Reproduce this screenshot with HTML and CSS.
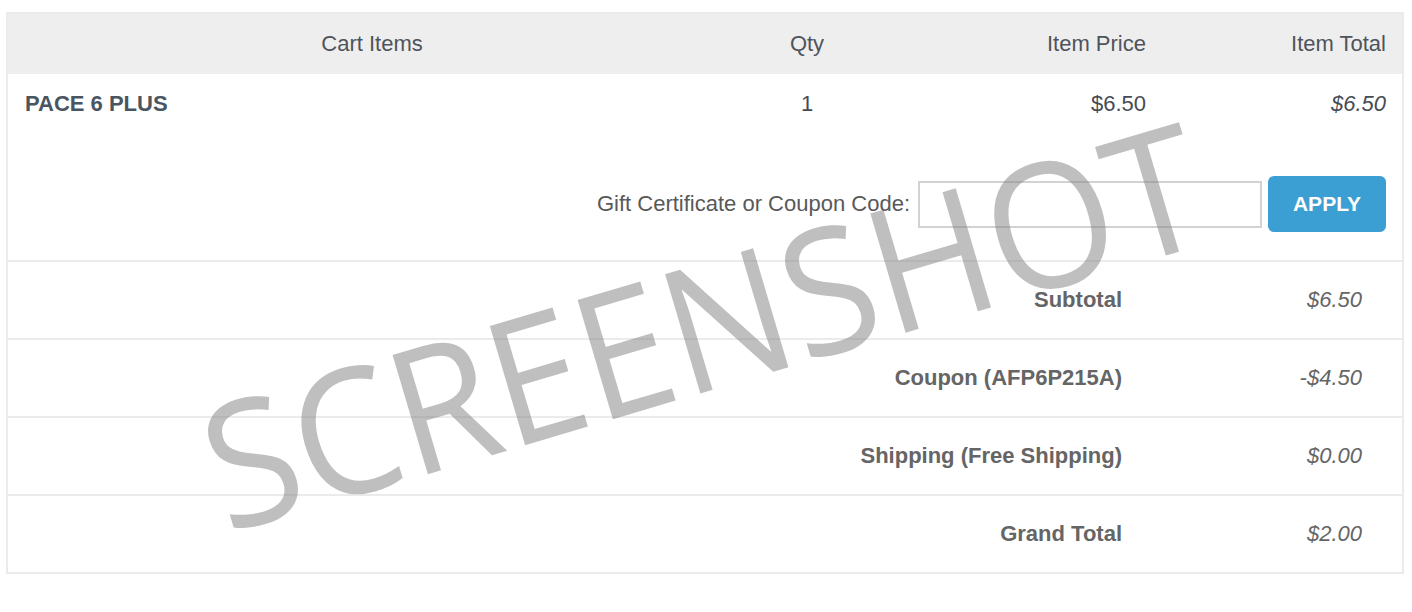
FILE: index.html
```html
<!DOCTYPE html>
<html lang="en">
<head>
<meta charset="utf-8">
<title>Cart</title>
<link rel="stylesheet" href="styles.css">
</head>
<body>
<div class="page">
  <div class="cart">
    <div class="cart-head">
      <div class="col col-items">Cart Items</div>
      <div class="col col-qty">Qty</div>
      <div class="col col-price">Item Price</div>
      <div class="col col-total">Item Total</div>
    </div>
    <div class="cart-body">
      <div class="item-row">
        <div class="col col-items item-name">PACE 6 PLUS</div>
        <div class="col col-qty">1</div>
        <div class="col col-price">$6.50</div>
        <div class="col col-total"><em>$6.50</em></div>
      </div>
      <form class="coupon">
        <label class="coupon-label" for="code">Gift Certificate or Coupon Code:</label>
        <input class="coupon-input" id="code" type="text">
        <button class="coupon-btn" type="button">APPLY</button>
      </form>
    </div>
    <div class="totals">
      <div class="total-row">
        <div class="total-label">Subtotal</div>
        <div class="total-value">$6.50</div>
      </div>
      <div class="total-row">
        <div class="total-label">Coupon (AFP6P215A)</div>
        <div class="total-value">-$4.50</div>
      </div>
      <div class="total-row">
        <div class="total-label">Shipping (Free Shipping)</div>
        <div class="total-value">$0.00</div>
      </div>
      <div class="total-row">
        <div class="total-label">Grand Total</div>
        <div class="total-value">$2.00</div>
      </div>
    </div>
  </div>
  <div class="watermark">SCREENSHOT</div>
</div>
</body>
</html>
```
FILE: styles.css
```css
* { box-sizing: border-box; }

html, body {
  margin: 0;
  padding: 0;
  background: #fff;
}

body {
  font-family: "Liberation Sans", Arial, Helvetica, sans-serif;
  font-size: 22px;
}

.page {
  position: relative;
  width: 1412px;
  height: 612px;
  overflow: hidden;
  padding: 12px 0 0 6px;
}

.cart {
  width: 1398px;
  border: 2px solid #ebebeb;
}

.cart-head,
.item-row {
  display: grid;
  grid-template-columns: 728px 142px 284px 240px;
}

.cart-head {
  background: #eeeeee;
  height: 60px;
  line-height: 60px;
  color: #4f545b;
}

.col-items { text-align: center; }
.col-qty { text-align: center; }
.col-price { text-align: right; padding-right: 16px; }
.col-total { text-align: right; padding-right: 16px; }

.item-row {
  padding-top: 15px;
  line-height: 30px;
  color: #464c54;
}

.item-row .item-name {
  text-align: left;
  padding-left: 17px;
  font-weight: bold;
  color: #4a5562;
}

.item-row em { font-style: italic; }

.coupon {
  display: flex;
  justify-content: flex-end;
  align-items: center;
  margin: 57px 0 0;
  padding: 0 16px 28px 0;
  border-bottom: 2px solid #ebebeb;
}

.coupon-label {
  color: #595959;
  margin-right: 8px;
}

.coupon-input {
  width: 344px;
  height: 47px;
  border: 2px solid #d2d2d2;
  margin: 0 6px 0 0;
  padding: 0 8px;
  font: inherit;
  background: #fff;
}

.coupon-btn {
  width: 118px;
  height: 56px;
  border: 0;
  border-radius: 6px;
  background: #3c9fd3;
  color: #fff;
  font-family: "Liberation Sans", Arial, sans-serif;
  font-weight: bold;
  font-size: 21px;
  padding: 0;
}

.total-row {
  display: grid;
  grid-template-columns: 1fr 264px;
  height: 78px;
  align-items: center;
  border-bottom: 2px solid #ebebeb;
  color: #656565;
}

.total-row:last-child {
  border-bottom: 0;
  height: 76px;
}

.total-label {
  text-align: right;
  padding-right: 16px;
  font-weight: bold;
}

.total-value {
  text-align: right;
  padding-right: 40px;
  font-style: italic;
}

.watermark {
  position: absolute;
  left: 183px;
  top: 386px;
  font-family: "Open Sans", "DejaVu Sans", sans-serif;
  font-weight: 400;
  font-size: 174px;
  line-height: 1;
  white-space: nowrap;
  color: rgba(128, 128, 128, 0.5);
  transform-origin: 0 0;
  transform: rotate(-16.5deg) scaleX(0.945);
  pointer-events: none;
}
```
